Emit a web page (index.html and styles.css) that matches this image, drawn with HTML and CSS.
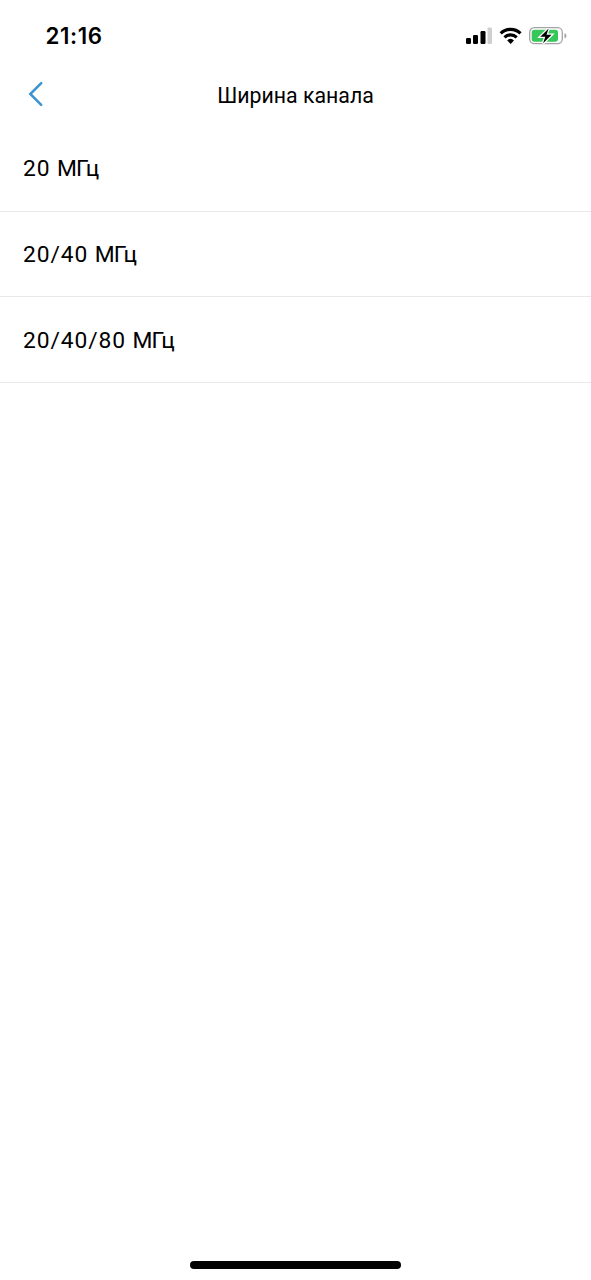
FILE: index.html
```html
<!DOCTYPE html>
<html lang="ru">
<head>
  <meta charset="UTF-8" />
  <meta name="viewport" content="width=device-width, initial-scale=1.0" />
  <title>Ширина канала</title>
  <link rel="stylesheet" href="styles.css">
</head>
<body>
  <div class="status-bar">
    <span class="time">21:16</span>
    <svg class="status-icons" width="104" height="20" viewBox="0 0 104 20">
      <!-- signal -->
      <rect x="2" y="12" width="5" height="6" rx="1.2" />
      <rect x="9" y="9" width="5" height="9" rx="1.2" />
      <rect x="16.5" y="5" width="5" height="13" rx="1.2" />
      <rect x="23.5" y="1.5" width="4.5" height="16.5" rx="1.2" fill="#cfcfcf" />
      <!-- wifi -->
      <g fill="none" stroke="#000" stroke-width="3.2">
        <path d="M36.7 7.3a14.2 14.2 0 0 1 19.8 0" />
        <path d="M40.5 11.3a8.8 8.8 0 0 1 12.2 0" />
      </g>
      <path d="M43.2 14.4a5 5 0 0 1 6.8 0L46.6 18z" />
      <!-- battery -->
      <rect x="65.7" y="1.7" width="32.6" height="16" rx="4.7" fill="#fff" stroke="#a3a3a3" stroke-width="1.3" />
      <rect x="67.7" y="3.7" width="26.3" height="12" rx="2.7" fill="#35c759" />
      <path d="M100.5 6.9c2.6 1 2.6 4.6 0 5.6z" fill="#a3a3a3" />
      <path d="M84.6 2.6L76.3 10.8h5l-2.2 6.5 8.5-8.6h-5.1z" stroke="#fff" stroke-width="2.6" paint-order="stroke" />
    </svg>
  </div>

  <div class="header">
    <a class="back" href="#" aria-label="Назад">
      <svg width="16" height="26" viewBox="0 0 16 26">
        <path d="M13.2 2.2L2.3 13l10.9 10.8" fill="none" stroke="#3c93d0" stroke-width="2.5" stroke-linecap="round" />
      </svg>
    </a>
    <h1>Ширина канала</h1>
  </div>

  <ul class="options">
    <li>20 <span class="unit">МГц</span></li>
    <li>20/40 <span class="unit">МГц</span></li>
    <li>20/40/80 <span class="unit">МГц</span></li>
  </ul>

  <div class="home-bar"></div>
</body>
</html>
```

FILE: styles.css
```css
* {
  box-sizing: border-box;
}
body {
  margin: 0;
  height: 1280px;
  display: flex;
  flex-direction: column;
  font-family: Roboto, sans-serif;
  background: #fff;
  color: #000;
}
.status-bar {
  display: flex;
  align-items: center;
  justify-content: space-between;
  height: 72px;
  padding: 0 23px 0 45.5px;
}
.time {
  padding-bottom: 2px;
  font-family: Inter, sans-serif;
  font-size: 22.3px;
  font-weight: 600;
  letter-spacing: 0.6px;
}
.header {
  display: grid;
  grid-template-columns: 60px 1fr 60px;
  align-items: center;
  height: 46px;
}
.back {
  display: flex;
  padding-left: 27.5px;
  margin-top: -3px;
}
h1 {
  margin: 0;
  font-size: 21.3px;
  font-weight: 400;
  text-align: center;
}
.options {
  list-style: none;
  margin: 8px 0 0;
  padding: 0;
}
.options li {
  height: 85.6px;
  padding: 29.4px 23px 0;
  border-bottom: 1px solid #e9e9e9;
  font-size: 22.8px;
  line-height: 28px;
  letter-spacing: 0.9px;
}
.unit {
  letter-spacing: -0.8px;
}
.home-bar {
  width: 211px;
  height: 8px;
  margin: auto auto 11px;
  border-radius: 4px;
  background: #000;
}
```
